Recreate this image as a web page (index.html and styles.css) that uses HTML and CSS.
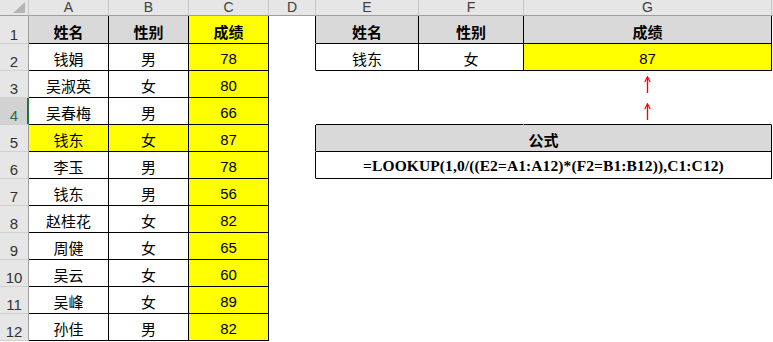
FILE: index.html
```html
<!DOCTYPE html>
<html lang="zh-CN">
<head>
<meta charset="utf-8">
<title>LOOKUP 多条件查询</title>
<link rel="stylesheet" href="styles.css">
</head>
<body>
<div class="sheet">
  <!-- column header row -->
  <div class="corner"><svg class="tri" width="12" height="11" viewBox="0 0 12 11"><polygon points="12,0 12,11 0,11" fill="#b4b4b4"/></svg></div>
  <div class="ch">A</div>
  <div class="ch">B</div>
  <div class="ch">C</div>
  <div class="ch">D</div>
  <div class="ch">E</div>
  <div class="ch">F</div>
  <div class="ch">G</div>
  <div class="ch fill"></div>

  <!-- row 1 -->
  <div class="rh">1</div>
  <div class="c t hd">姓名</div>
  <div class="c t hd">性别</div>
  <div class="c t hd y">成绩</div>
  <div class="c edge"></div>
  <div class="c t hd">姓名</div>
  <div class="c t hd">性别</div>
  <div class="c t hd">成绩</div>
  <div class="c"></div>

  <!-- row 2 -->
  <div class="rh">2</div>
  <div class="c t">钱娟</div>
  <div class="c t">男</div>
  <div class="c t y">78</div>
  <div class="c edge"></div>
  <div class="c t">钱东</div>
  <div class="c t">女</div>
  <div class="c t y">87</div>
  <div class="c"></div>

  <!-- row 3 -->
  <div class="rh">3</div>
  <div class="c t">吴淑英</div>
  <div class="c t">女</div>
  <div class="c t y">80</div>
  <div class="c"></div>
  <div class="c span2"></div>
  <div class="c arrow"><svg width="7" height="17" viewBox="0 0 7 17"><path d="M3.5 1.5 V17" stroke="#ff0000" stroke-width="1.4" fill="none"/><path d="M0.8 6 L3.5 0.8 L6.2 6" stroke="#ff0000" stroke-width="1.2" fill="none"/></svg></div>
  <div class="c"></div>

  <!-- row 4 -->
  <div class="rh sel">4</div>
  <div class="c t">吴春梅</div>
  <div class="c t">男</div>
  <div class="c t y">66</div>
  <div class="c"></div>
  <div class="c span2 under"></div>
  <div class="c arrow under"><svg width="7" height="17" viewBox="0 0 7 17"><path d="M3.5 1.5 V17" stroke="#ff0000" stroke-width="1.4" fill="none"/><path d="M0.8 6 L3.5 0.8 L6.2 6" stroke="#ff0000" stroke-width="1.2" fill="none"/></svg></div>
  <div class="c"></div>

  <!-- row 5 -->
  <div class="rh">5</div>
  <div class="c t y">钱东</div>
  <div class="c t y">女</div>
  <div class="c t y">87</div>
  <div class="c edge"></div>
  <div class="c t hd span3">公式</div>
  <div class="c"></div>

  <!-- row 6 -->
  <div class="rh">6</div>
  <div class="c t">李玉</div>
  <div class="c t">男</div>
  <div class="c t y">78</div>
  <div class="c edge"></div>
  <div class="c t span3 formula">=LOOKUP(1,0/((E2=A1:A12)*(F2=B1:B12)),C1:C12)</div>
  <div class="c"></div>

  <!-- row 7 -->
  <div class="rh">7</div>
  <div class="c t">钱东</div>
  <div class="c t">男</div>
  <div class="c t y">56</div>
  <div class="c rest"></div>

  <!-- row 8 -->
  <div class="rh">8</div>
  <div class="c t">赵桂花</div>
  <div class="c t">女</div>
  <div class="c t y">82</div>
  <div class="c rest"></div>

  <!-- row 9 -->
  <div class="rh">9</div>
  <div class="c t">周健</div>
  <div class="c t">女</div>
  <div class="c t y">65</div>
  <div class="c rest"></div>

  <!-- row 10 -->
  <div class="rh">10</div>
  <div class="c t">吴云</div>
  <div class="c t">女</div>
  <div class="c t y">60</div>
  <div class="c rest"></div>

  <!-- row 11 -->
  <div class="rh">11</div>
  <div class="c t">吴峰</div>
  <div class="c t">女</div>
  <div class="c t y">89</div>
  <div class="c rest"></div>

  <!-- row 12 -->
  <div class="rh">12</div>
  <div class="c t">孙佳</div>
  <div class="c t">男</div>
  <div class="c t y">82</div>
  <div class="c rest"></div>
</div>
</body>
</html>
```
FILE: styles.css
```css
html, body {
  margin: 0;
  padding: 0;
  background: #ffffff;
}

.sheet {
  display: grid;
  grid-template-columns: 29px 80px 80px 80px 47px 103px 105px 248px 1px;
  grid-template-rows: 16px 28px repeat(11, 27px);
  width: 773px;
  font-family: "Liberation Sans", "Noto Sans CJK SC", sans-serif;
  color: #000;
}

.sheet > div {
  box-sizing: border-box;
  min-width: 0;
}

/* column header strip */
.corner {
  background: #e6e6e6;
  border-right: 1px solid #c6c6c6;
  border-bottom: 1px solid #9e9e9e;
  display: flex;
  align-items: flex-end;
  justify-content: flex-end;
  padding: 0 3px 2px 0;
}
.tri { display: block; }

.ch {
  background: #e6e6e6;
  border-right: 1px solid #c6c6c6;
  border-bottom: 1px solid #9e9e9e;
  font-size: 14px;
  line-height: 15px;
  color: #404040;
  text-align: center;
  overflow: hidden;
}
.ch.fill { border-right: none; }

/* row headers */
.rh {
  background: #e6e6e6;
  border-right: 1px solid #9e9e9e;
  border-bottom: 1px solid #d0d0d0;
  font-size: 15px;
  line-height: 14px;
  color: #333;
  display: flex;
  align-items: flex-end;
  justify-content: center;
  padding-bottom: 1px;
}
.rh.sel {
  background: #d2d2d2;
  color: #217346;
  border-right-color: #217346;
  box-shadow: inset -1px 0 0 #217346;
}

/* cells */
.c {
  border-right: 1px solid transparent;
  border-bottom: 1px solid transparent;
  display: flex;
  align-items: center;
  justify-content: center;
  font-size: 15px;
  padding-top: 3px;
  white-space: nowrap;
}
.c.t {
  border-right-color: #000;
  border-bottom-color: #000;
}
.c.hd {
  background: #d9d9d9;
  font-weight: bold;
}
.c.y { background: #ffff00; }
.c.edge { border-right-color: #000; }
.c.under { border-bottom-color: #000; }

.span2 { grid-column: span 2; }
.span3 { grid-column: span 3; }
.rest { grid-column: span 5; }

.arrow {
  padding-top: 0;
}
.arrow svg { display: block; }

.formula {
  font-family: "Liberation Serif", "Times New Roman", serif;
  font-weight: bold;
  font-size: 15.5px;
  letter-spacing: 0.1px;
  padding-top: 1px;
}
```
